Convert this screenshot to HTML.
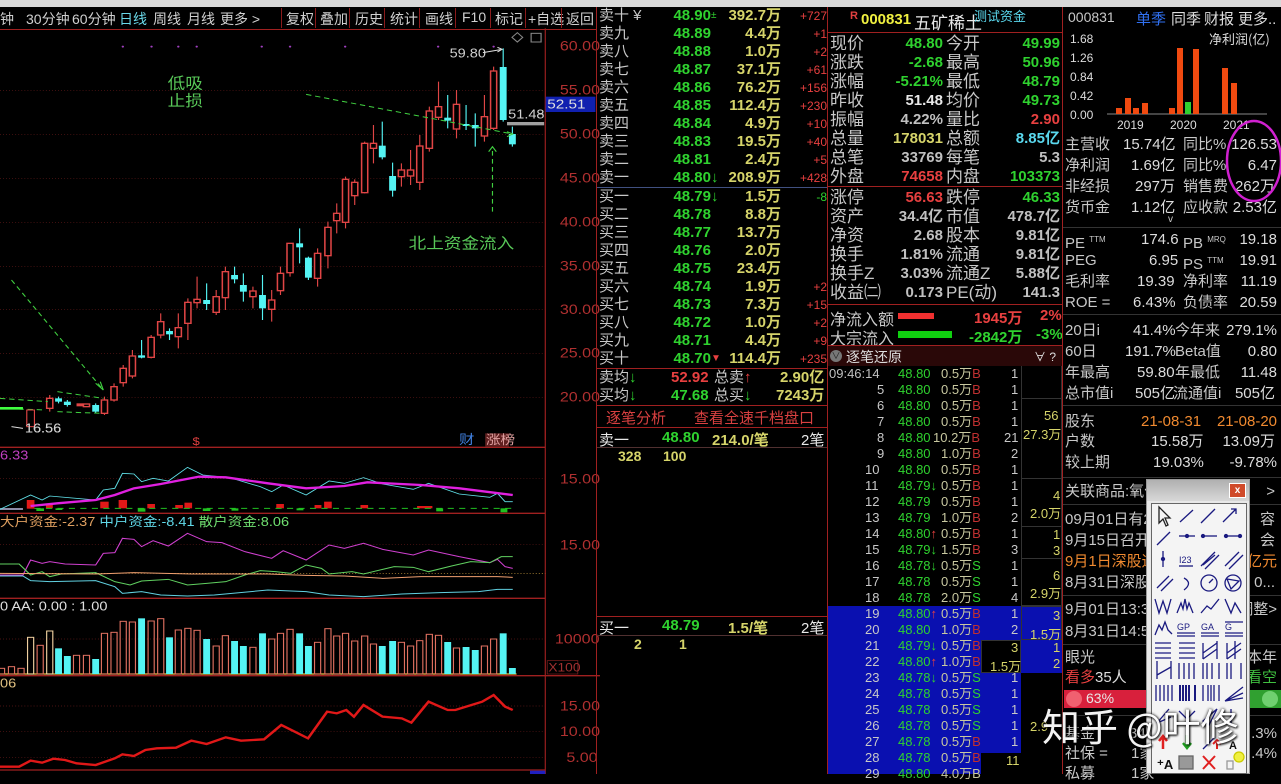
<!DOCTYPE html>
<html><head><meta charset="utf-8">
<style>
*{margin:0;padding:0;box-sizing:border-box}
body{width:1281px;height:774px;background:#000;overflow:hidden;position:relative;font-family:"Liberation Sans","Noto Sans CJK SC",sans-serif;color:#c8c8c8}
.a{position:absolute;white-space:nowrap}
.g{color:#2fd22f}.y{color:#d6d46a}.r{color:#e84040}.w{color:#e8e8e8}.c{color:#5ad8ee}.gr{color:#c0c0c0}.o{color:#f08a30}
.ob{position:absolute;left:599px;width:228px;height:18px;display:grid;grid-template-columns:70px 42px 14px 56px 46px;font-size:15px;line-height:18px}
.ob span:nth-child(2),.ob span:nth-child(4),.ob span:nth-child(5){text-align:right;font-weight:bold}
.ob span:nth-child(5){font-size:12px;font-weight:normal}
.ip{position:absolute;left:830px;width:231px;height:19px;font-size:17px;line-height:19px}
.ip span{position:absolute;white-space:nowrap}
.ip span:nth-child(1){left:0}
.ip span:nth-child(2){right:118px;font-weight:bold;font-size:15px}
.ip span:nth-child(3){left:116px}
.ip span:nth-child(4){right:1px;font-weight:bold;font-size:15px}
.tk{position:absolute;left:829px;width:190px;height:16px;font-size:13px;line-height:16px}
.tk span{position:absolute}
.fr{position:absolute;left:1065px;width:214px;height:21px;font-size:15px;line-height:21px}
.fr span{position:absolute}
.hl{position:absolute;height:1px;background:#8a1a1a}
.vl{position:absolute;width:1px;background:#8a1a1a}
.tb span{position:absolute;top:9px;font-size:14px;color:#d0d0d0}
</style></head><body>
<div class="a" style="left:0;top:0;width:1281px;height:7px;background:#d8d8d8"></div>
<div class="tb">
<span style="left:0">钟</span><span style="left:26px">30分钟</span><span style="left:72px">60分钟</span><span style="left:119px;color:#6ad8e8">日线</span><span style="left:153px">周线</span><span style="left:187px">月线</span><span style="left:220px">更多 &gt;</span>
<span style="left:286px">复权</span><span style="left:320px">叠加</span><span style="left:355px">历史</span><span style="left:390px">统计</span><span style="left:425px">画线</span><span style="left:462px">F10</span><span style="left:495px">标记</span><span style="left:528px">+自选</span><span style="left:566px">返回</span>
</div>
<div class="vl" style="left:281px;top:8px;height:20px"></div><div class="vl" style="left:315px;top:8px;height:20px"></div><div class="vl" style="left:349px;top:8px;height:20px"></div><div class="vl" style="left:384px;top:8px;height:20px"></div><div class="vl" style="left:419px;top:8px;height:20px"></div><div class="vl" style="left:455px;top:8px;height:20px"></div><div class="vl" style="left:490px;top:8px;height:20px"></div><div class="vl" style="left:525px;top:8px;height:20px"></div><div class="vl" style="left:561px;top:8px;height:20px"></div>
<div class="hl" style="left:0;top:29px;width:597px;background:#a02020"></div>

<svg class="a" style="left:0;top:0" width="600" height="440" viewBox="0 0 1568 1320" preserveAspectRatio="none">
<g stroke="#802020" stroke-width="2" stroke-dasharray="2 6">
<line x1="0" y1="271" x2="1425" y2="271"/><line x1="0" y1="403" x2="1425" y2="403"/><line x1="0" y1="535" x2="1425" y2="535"/><line x1="0" y1="667" x2="1425" y2="667"/><line x1="0" y1="799" x2="1425" y2="799"/><line x1="0" y1="929" x2="1425" y2="929"/><line x1="0" y1="1060" x2="1425" y2="1060"/><line x1="0" y1="1192" x2="1425" y2="1192"/>
</g>
<line x1="1425" y1="85" x2="1425" y2="1320" stroke="#a02020" stroke-width="3"/>
<g fill="#b03030" font-size="42" font-family="Liberation Sans">
<text x="1463" y="152">60.00</text><text x="1463" y="284">55.00</text><text x="1463" y="416">50.00</text><text x="1463" y="548">45.00</text><text x="1463" y="680">40.00</text><text x="1463" y="812">35.00</text><text x="1463" y="942">30.00</text><text x="1463" y="1073">25.00</text><text x="1463" y="1205">20.00</text>
</g>
<rect x="1426" y="290" width="130" height="46" fill="#1020b0"/>
<text x="1430" y="325" fill="#e0e0e0" font-size="40" font-family="Liberation Sans">52.51</text>
<g fill="#a040c0"><circle cx="321" cy="140" r="3"/><circle cx="396" cy="140" r="3"/><circle cx="466" cy="140" r="3"/><circle cx="514" cy="140" r="3"/><circle cx="684" cy="140" r="3"/><circle cx="758" cy="140" r="3"/><circle cx="902" cy="140" r="3"/><circle cx="1145" cy="140" r="3"/><circle cx="1290" cy="140" r="3"/></g>
<rect x="1388" y="100" width="26" height="26" fill="none" stroke="#888" stroke-width="3"/><path d="M1352 98 L1366 112 L1352 126 L1338 112Z" fill="none" stroke="#888" stroke-width="3"/>
<g stroke="#e04545" stroke-width="3">
<path d="M130 1185V1235M273 1190V1245M298 1150V1205M322 1095V1160M346 1050V1135M395 1005V1075M420 940V1015M466 940V1045M491 895V1020M515 830V925M565 870V945M589 800V930M661 860V925M710 870V965M733 800V885M758 730V830M830 745V860M857 665V805M880 610V700M903 530V685M927 538V615M953 425V580M976 375V490M1049 490V560M1073 450V555M1097 405V570M1122 320V455M1146 245V360M1193 270V415M1266 285V425M1290 200V390"/>
</g>
<g stroke="#54f4f4" stroke-width="3">
<path d="M153 1190V1210M176 1200V1220M250 1210V1240M370 1020V1075M443 985V1020M540 850V930M613 800V850M636 820V905M686 825V960M783 685V790M806 770V840M999 365V478M1026 488V590M1170 285V385M1218 315V390M1242 340V440M1315 145V365M1339 380V440"/>
</g>
<g fill="#000" stroke="#e04545" stroke-width="4">
<rect x="122" y="1195" width="16" height="30"/><rect x="202" y="1212" width="14" height="5" fill="#e04545"/><rect x="218" y="1212" width="16" height="8"/><rect x="265" y="1200" width="16" height="40"/><rect x="290" y="1160" width="16" height="40"/><rect x="314" y="1105" width="16" height="43"/><rect x="338" y="1068" width="16" height="60"/><rect x="387" y="1012" width="16" height="60"/><rect x="412" y="965" width="16" height="40"/><rect x="458" y="983" width="16" height="27"/><rect x="483" y="907" width="16" height="63"/><rect x="507" y="898" width="16" height="10"/><rect x="557" y="890" width="16" height="47"/><rect x="581" y="815" width="16" height="78"/><rect x="653" y="873" width="16" height="17"/><rect x="702" y="900" width="16" height="28"/><rect x="725" y="820" width="16" height="52"/><rect x="750" y="730" width="16" height="88"/><rect x="822" y="760" width="16" height="75"/><rect x="849" y="682" width="16" height="85"/><rect x="872" y="640" width="16" height="22"/><rect x="895" y="538" width="16" height="129"/><rect x="919" y="547" width="16" height="40"/><rect x="945" y="430" width="16" height="148"/><rect x="968" y="430" width="16" height="15"/><rect x="1041" y="510" width="16" height="20"/><rect x="1065" y="510" width="16" height="18"/><rect x="1089" y="438" width="16" height="109"/><rect x="1114" y="333" width="16" height="112"/><rect x="1138" y="320" width="16" height="32"/><rect x="1185" y="313" width="16" height="74"/><rect x="1258" y="350" width="16" height="58"/><rect x="1282" y="213" width="16" height="172"/>
</g>
<g fill="#54f4f4">
<rect x="144" y="1195" width="18" height="10"/><rect x="167" y="1205" width="18" height="10"/><rect x="241" y="1215" width="18" height="20"/><rect x="361" y="1066" width="18" height="7"/><rect x="434" y="993" width="18" height="10"/><rect x="531" y="900" width="18" height="12"/><rect x="604" y="825" width="18" height="13"/><rect x="627" y="855" width="18" height="20"/><rect x="677" y="885" width="18" height="40"/><rect x="774" y="730" width="18" height="12"/><rect x="797" y="773" width="18" height="60"/><rect x="990" y="437" width="18" height="35"/><rect x="1017" y="528" width="18" height="44"/><rect x="1161" y="353" width="18" height="9"/><rect x="1209" y="372" width="18" height="6"/><rect x="1233" y="375" width="18" height="10"/><rect x="1306" y="201" width="18" height="159"/><rect x="1330" y="402" width="18" height="31"/>
</g>
<rect x="1325" y="366" width="97" height="10" fill="#a0a0a0"/>
<g stroke="#40d040" stroke-width="3" fill="none" stroke-dasharray="14 10">
<path d="M800 283 L1340 402"/><path d="M30 840 L270 1170"/><path d="M0 1195 L125 1205"/><path d="M150 1175 L270 1195"/><path d="M0 1225 L120 1230"/><path d="M150 1235 L265 1240"/><path d="M1287 635 L1287 440"/>
</g>
<g stroke="#40d040" stroke-width="3" fill="none"><path d="M250 1150 L270 1170 L262 1145M1277 455 L1287 440 L1297 455M1325 395 L1340 402 L1325 410"/></g>
<path d="M0 1225 L60 1225" stroke="#40ff40" stroke-width="8"/>
<g fill="#58c858" font-size="46" font-family="Noto Sans CJK SC"><text x="438" y="265">低吸</text><text x="438" y="318">止损</text><text x="1068" y="745">北上资金流入</text></g>
<g fill="#d0d0d0" font-size="38" font-family="Liberation Sans"><text x="1175" y="172">59.80</text><text x="1328" y="355">51.48</text><text x="65" y="1298">16.56</text></g>
<path d="M1262 158 L1312 148 M1300 142 L1312 148 L1300 156" stroke="#ddd" stroke-width="3" fill="none"/>
<path d="M1408 342 L1420 342" stroke="#ddd" stroke-width="3"/>
<path d="M30 1280 L60 1285" stroke="#ddd" stroke-width="3"/>
<rect x="70" y="1230" width="20" height="50" fill="none" stroke="#e04545" stroke-width="3"/>
</svg>

<svg class="a" style="left:0;top:420px" width="600" height="354" viewBox="0 0 1568 1062" preserveAspectRatio="none">
<line x1="0" y1="82" x2="1425" y2="82" stroke="#a02020" stroke-width="4"/>
<line x1="0" y1="280" x2="1425" y2="280" stroke="#a02020" stroke-width="4"/>
<line x1="0" y1="535" x2="1425" y2="535" stroke="#a02020" stroke-width="4"/>
<line x1="0" y1="767" x2="1568" y2="767" stroke="#a02020" stroke-width="4"/>
<line x1="1425" y1="0" x2="1425" y2="1062" stroke="#a02020" stroke-width="3"/>
<line x1="0" y1="1050" x2="1425" y2="1050" stroke="#a02020" stroke-width="4"/>
<g stroke="#802020" stroke-width="2" stroke-dasharray="2 6"><line x1="0" y1="176" x2="1425" y2="176"/><line x1="0" y1="374" x2="1425" y2="374"/><line x1="0" y1="657" x2="1425" y2="657"/><line x1="0" y1="858" x2="1425" y2="858"/><line x1="0" y1="935" x2="1425" y2="935"/><line x1="0" y1="1013" x2="1425" y2="1013"/></g>
<line x1="0" y1="460" x2="1425" y2="460" stroke="#d0a040" stroke-width="2" stroke-dasharray="3 5"/>
<g fill="#b03030" font-size="42" font-family="Liberation Sans"><text x="1463" y="190">15.00</text><text x="1463" y="388">15.00</text><text x="1450" y="670">10000</text><text x="1463" y="872">15.00</text><text x="1463" y="948">10.00</text><text x="1480" y="1026">5.00</text></g>
<rect x="1430" y="722" width="80" height="40" fill="none" stroke="#802020" stroke-width="2"/><text x="1433" y="754" fill="#a03030" font-size="36" font-family="Liberation Sans">X100</text>
<text x="1200" y="72" fill="#4080e0" font-size="40" font-family="Noto Sans CJK SC">财</text>
<rect x="1268" y="40" width="62" height="40" fill="#602020"/><text x="1270" y="72" fill="#e0a0a0" font-size="38" font-family="Noto Sans CJK SC">涨榜</text>
<text x="503" y="75" fill="#e04040" font-size="34" font-family="Liberation Sans">$</text>
<text x="65" y="38" fill="#d0d0d0" font-size="38" font-family="Liberation Sans">16.56</text>
<text x="0" y="118" fill="#c040c0" font-size="38" font-family="Liberation Sans">6.33</text>
<g>
<rect x="70" y="240" width="20" height="26" fill="#e01818"/><rect x="120" y="255" width="18" height="10" fill="#e01818"/><rect x="95" y="265" width="20" height="8" fill="#20c020"/><rect x="145" y="265" width="18" height="5" fill="#20c020"/><rect x="262" y="245" width="22" height="20" fill="#e01818"/><rect x="310" y="240" width="22" height="25" fill="#e01818"/><rect x="360" y="265" width="20" height="10" fill="#20c020"/><rect x="385" y="252" width="20" height="13" fill="#e01818"/><rect x="458" y="255" width="20" height="10" fill="#e01818"/><rect x="482" y="248" width="20" height="17" fill="#e01818"/><rect x="530" y="265" width="20" height="8" fill="#20c020"/><rect x="605" y="265" width="18" height="7" fill="#20c020"/><rect x="722" y="252" width="20" height="13" fill="#e01818"/><rect x="775" y="265" width="18" height="6" fill="#20c020"/><rect x="822" y="255" width="18" height="10" fill="#e01818"/><rect x="847" y="245" width="20" height="20" fill="#e01818"/><rect x="942" y="255" width="20" height="10" fill="#e01818"/><rect x="1090" y="258" width="40" height="7" fill="#e01818"/><rect x="1140" y="265" width="18" height="9" fill="#20c020"/><rect x="1308" y="265" width="18" height="12" fill="#20c020"/>
<line x1="90" y1="265" x2="1350" y2="265" stroke="#20c020" stroke-width="3" stroke-dasharray="16 14"/>
<line x1="0" y1="267" x2="60" y2="267" stroke="#a0a0c0" stroke-width="5"/>
</g>
<polyline fill="none" stroke="#60e0e8" stroke-width="2.5" points="0,268 80,225 110,240 130,228 250,240 270,210 300,205 320,160 350,162 370,185 400,175 440,183 490,142 530,165 600,173 680,200 710,215 740,195 800,225 860,183 900,190 950,173 1000,192 1080,208 1120,190 1200,222 1280,232 1300,220 1320,245 1340,245"/>
<polyline fill="none" stroke="#e020e0" stroke-width="7" points="80,258 150,250 250,240 300,225 350,205 420,192 520,170 590,172 700,190 800,205 900,198 960,187 1100,195 1200,205 1340,225"/>
<text x="0" y="318" font-size="38" font-family="Liberation Sans,Noto Sans CJK SC"><tspan fill="#e0a060">大户资金:-2.37 </tspan><tspan fill="#60d8e8">中户资金:-8.41 </tspan><tspan fill="#70e070">散户资金:8.06</tspan></text>
<polyline fill="none" stroke="#d040d0" stroke-width="3" points="0,465 60,465 80,420 110,430 130,425 170,432 250,435 270,400 300,398 320,355 350,358 370,380 400,362 440,378 490,340 540,365 580,368 640,395 710,415 740,392 800,420 860,375 900,385 950,370 1000,388 1080,405 1120,390 1200,410 1280,428 1300,418 1320,440 1340,445"/>
<polyline fill="none" stroke="#60d060" stroke-width="3" points="0,432 50,432 80,465 110,455 130,470 160,462 250,458 300,485 340,495 370,483 440,478 490,495 540,490 590,485 640,465 680,452 720,455 760,460 800,435 840,445 860,462 920,455 950,462 1000,448 1030,440 1080,442 1120,455 1180,438 1230,425 1280,428 1310,410 1340,410"/>
<polyline fill="none" stroke="#60d0e0" stroke-width="3" points="0,468 60,468 80,482 130,485 250,482 300,500 320,520 370,515 420,525 490,528 560,525 700,510 800,515 860,525 950,530 1050,522 1150,518 1250,515 1300,508 1340,508"/>
<polyline fill="none" stroke="#f0a070" stroke-width="3" points="0,460 250,462 350,458 500,462 700,462 800,466 900,468 1000,475 1100,470 1300,470 1340,472"/>
<text x="0" y="572" fill="#e0e0e0" font-size="38" font-family="Liberation Sans">0 AA: 0.00   : 1.00</text>
<line x1="0" y1="762" x2="1350" y2="762" stroke="#f0c040" stroke-width="4"/>
<g fill="none" stroke="#e07060" stroke-width="3">
<rect x="-4" y="745" width="16" height="17"/><rect x="22" y="740" width="16" height="22"/><rect x="47" y="745" width="16" height="17"/><rect x="72" y="652" width="16" height="110" stroke="#f0d0a0"/><rect x="97" y="676" width="16" height="86"/><rect x="122" y="633" width="16" height="129" stroke="#f0d0a0"/><rect x="192" y="706" width="16" height="56"/><rect x="218" y="706" width="16" height="56"/><rect x="265" y="640" width="16" height="122"/><rect x="290" y="637" width="16" height="125"/><rect x="314" y="604" width="16" height="158"/><rect x="338" y="606" width="16" height="156"/><rect x="387" y="603" width="16" height="159"/><rect x="412" y="596" width="16" height="166"/><rect x="458" y="630" width="16" height="132"/><rect x="483" y="625" width="16" height="137"/><rect x="507" y="631" width="16" height="131"/><rect x="557" y="678" width="16" height="84"/><rect x="581" y="647" width="16" height="115"/><rect x="653" y="682" width="16" height="80"/><rect x="702" y="657" width="16" height="105"/><rect x="725" y="640" width="16" height="122"/><rect x="750" y="628" width="16" height="134"/><rect x="822" y="667" width="16" height="95"/><rect x="849" y="626" width="16" height="136"/><rect x="872" y="648" width="16" height="114"/><rect x="895" y="640" width="16" height="122"/><rect x="919" y="663" width="16" height="99"/><rect x="945" y="648" width="16" height="114"/><rect x="968" y="672" width="16" height="90"/><rect x="1041" y="667" width="16" height="95"/><rect x="1065" y="678" width="16" height="84"/><rect x="1089" y="662" width="16" height="100"/><rect x="1114" y="643" width="16" height="119"/><rect x="1138" y="646" width="16" height="116"/><rect x="1185" y="684" width="16" height="78"/><rect x="1258" y="678" width="16" height="84"/><rect x="1282" y="657" width="16" height="105"/>
</g>
<g fill="#54f4f4">
<rect x="144" y="685" width="18" height="77"/><rect x="167" y="708" width="18" height="54"/><rect x="241" y="717" width="18" height="45"/><rect x="361" y="595" width="18" height="167"/><rect x="434" y="652" width="18" height="110"/><rect x="531" y="657" width="18" height="105"/><rect x="604" y="663" width="18" height="99"/><rect x="627" y="678" width="18" height="84"/><rect x="677" y="640" width="18" height="122"/><rect x="774" y="640" width="18" height="122"/><rect x="797" y="678" width="18" height="84"/><rect x="990" y="678" width="18" height="84"/><rect x="1017" y="663" width="18" height="99"/><rect x="1161" y="666" width="18" height="96"/><rect x="1209" y="681" width="18" height="81"/><rect x="1233" y="690" width="18" height="72"/><rect x="1306" y="640" width="18" height="122"/><rect x="1330" y="744" width="18" height="18"/>
</g>
<text x="0" y="802" fill="#e0c080" font-size="38" font-family="Liberation Sans">06</text>
<polyline fill="none" stroke="#e01818" stroke-width="7" points="0,1040 50,1040 80,1022 110,1028 140,1016 170,1020 200,1030 250,1035 300,1015 320,1003 350,1008 380,990 410,985 460,983 500,962 540,972 590,952 630,962 690,958 735,915 770,935 805,955 855,875 880,880 905,870 925,890 950,855 1000,890 1050,895 1075,908 1120,845 1170,870 1190,870 1260,845 1290,825 1320,860 1340,870"/>
<rect x="1385" y="1052" width="40" height="10" fill="#2020c0"/>
</svg>

<div class="vl" style="left:596px;top:7px;height:767px;background:#a02020"></div>
<div class="vl" style="left:827px;top:7px;height:767px;background:#a02020"></div>
<div class="ob" style="top:7px"><span>卖十 ¥</span><span class="g">48.90</span><span class="g" style="font-size:10px">±</span><span class="y">392.7万</span><span class="r">+727</span></div>
<div class="ob" style="top:25px"><span>卖九</span><span class="g">48.89</span><span></span><span class="y">4.4万</span><span class="r">+1</span></div>
<div class="ob" style="top:43px"><span>卖八</span><span class="g">48.88</span><span></span><span class="y">1.0万</span><span class="r">+2</span></div>
<div class="ob" style="top:61px"><span>卖七</span><span class="g">48.87</span><span></span><span class="y">37.1万</span><span class="r">+61</span></div>
<div class="ob" style="top:79px"><span>卖六</span><span class="g">48.86</span><span></span><span class="y">76.2万</span><span class="r">+156</span></div>
<div class="ob" style="top:97px"><span>卖五</span><span class="g">48.85</span><span></span><span class="y">112.4万</span><span class="r">+230</span></div>
<div class="ob" style="top:115px"><span>卖四</span><span class="g">48.84</span><span></span><span class="y">4.9万</span><span class="r">+10</span></div>
<div class="ob" style="top:133px"><span>卖三</span><span class="g">48.83</span><span></span><span class="y">19.5万</span><span class="r">+40</span></div>
<div class="ob" style="top:151px"><span>卖二</span><span class="g">48.81</span><span></span><span class="y">2.4万</span><span class="r">+5</span></div>
<div class="ob" style="top:169px"><span>卖一</span><span class="g">48.80</span><span class="g">↓</span><span class="y">208.9万</span><span class="r">+428</span></div>
<div class="hl" style="left:597px;top:187px;width:230px;background:#405080"></div>
<div class="ob" style="top:188px"><span>买一</span><span class="g">48.79</span><span class="g">↓</span><span class="y">1.5万</span><span class="g">-8</span></div>
<div class="ob" style="top:206px"><span>买二</span><span class="g">48.78</span><span></span><span class="y">8.8万</span><span></span></div>
<div class="ob" style="top:224px"><span>买三</span><span class="g">48.77</span><span></span><span class="y">13.7万</span><span></span></div>
<div class="ob" style="top:242px"><span>买四</span><span class="g">48.76</span><span></span><span class="y">2.0万</span><span></span></div>
<div class="ob" style="top:260px"><span>买五</span><span class="g">48.75</span><span></span><span class="y">23.4万</span><span></span></div>
<div class="ob" style="top:278px"><span>买六</span><span class="g">48.74</span><span></span><span class="y">1.9万</span><span class="r">+2</span></div>
<div class="ob" style="top:296px"><span>买七</span><span class="g">48.73</span><span></span><span class="y">7.3万</span><span class="r">+15</span></div>
<div class="ob" style="top:314px"><span>买八</span><span class="g">48.72</span><span></span><span class="y">1.0万</span><span class="r">+2</span></div>
<div class="ob" style="top:332px"><span>买九</span><span class="g">48.71</span><span></span><span class="y">4.4万</span><span class="r">+9</span></div>
<div class="ob" style="top:350px"><span>买十</span><span class="g">48.70</span><span class="r" style="font-size:10px">▼</span><span class="y">114.4万</span><span class="r">+235</span></div>
<div class="hl" style="left:597px;top:368px;width:230px;background:#a02020"></div>
<div class="a" style="left:599px;top:369px;font-size:15px;line-height:18px">卖均<span class="g">↓</span></div>
<div class="a r" style="left:671px;top:369px;font-size:15px;font-weight:bold;line-height:18px">52.92</div>
<div class="a" style="left:714px;top:369px;font-size:15px;line-height:18px">总卖<span class="r">↑</span></div>
<div class="a y" style="left:780px;top:369px;font-size:15px;line-height:18px;font-weight:bold">2.90亿</div>
<div class="a" style="left:599px;top:387px;font-size:15px;line-height:18px">买均<span class="g">↓</span></div>
<div class="a g" style="left:671px;top:387px;font-size:15px;font-weight:bold;line-height:18px">47.68</div>
<div class="a" style="left:714px;top:387px;font-size:15px;line-height:18px">总买<span class="g">↓</span></div>
<div class="a y" style="left:776px;top:387px;font-size:15px;line-height:18px;font-weight:bold">7243万</div>
<div class="hl" style="left:597px;top:405px;width:230px;background:#a02020"></div>
<div class="a r" style="left:606px;top:407px;font-size:15px;color:#d84040">逐笔分析</div>
<div class="a r" style="left:694px;top:407px;font-size:15px;color:#d84040">查看全速千档盘口</div>
<div class="hl" style="left:597px;top:427px;width:230px;background:#a02020"></div>
<div class="a w" style="left:599px;top:429px;font-size:15px">卖一</div><div class="a g" style="left:662px;top:429px;font-size:15px;font-weight:bold">48.80</div><div class="a y" style="left:712px;top:429px;font-size:15px;font-weight:bold">214.0/笔</div><div class="a w" style="left:801px;top:429px;font-size:15px">2笔</div>
<div class="hl" style="left:597px;top:447px;width:230px;background:#503030"></div>
<div class="a y" style="left:618px;top:448px;font-size:14px;font-weight:bold">328</div><div class="a y" style="left:663px;top:448px;font-size:14px;font-weight:bold">100</div>
<div class="hl" style="left:597px;top:616px;width:230px;background:#a02020"></div>
<div class="a w" style="left:599px;top:617px;font-size:15px">买一</div><div class="a g" style="left:662px;top:617px;font-size:15px;font-weight:bold">48.79</div><div class="a y" style="left:728px;top:617px;font-size:15px;font-weight:bold">1.5/笔</div><div class="a w" style="left:801px;top:617px;font-size:15px">2笔</div>
<div class="hl" style="left:597px;top:635px;width:230px;background:#503030"></div>
<div class="a y" style="left:634px;top:636px;font-size:14px;font-weight:bold">2</div><div class="a y" style="left:679px;top:636px;font-size:14px;font-weight:bold">1</div>

<div class="a" style="left:850px;top:10px;font-size:11px;color:#e04040;font-weight:bold">R</div>
<div class="a" style="left:861px;top:11px;font-size:15px;color:#f0f040;font-weight:bold">000831</div>
<div class="a w" style="left:914px;top:9px;font-size:17px">五矿稀土</div>
<div class="a c" style="left:974px;top:6px;font-size:13px">测试资金</div>
<div class="hl" style="left:828px;top:32px;width:234px;background:#a02020"></div>
<div class="ip" style="top:34px"><span>现价</span><span class="g">48.80</span><span>今开</span><span class="g">49.99</span></div>
<div class="ip" style="top:53px"><span>涨跌</span><span class="g">-2.68</span><span>最高</span><span class="g">50.96</span></div>
<div class="ip" style="top:72px"><span>涨幅</span><span class="g">-5.21%</span><span>最低</span><span class="g">48.79</span></div>
<div class="ip" style="top:91px"><span>昨收</span><span class="w">51.48</span><span>均价</span><span class="g">49.73</span></div>
<div class="ip" style="top:110px"><span>振幅</span><span class="gr">4.22%</span><span>量比</span><span class="r">2.90</span></div>
<div class="ip" style="top:129px"><span>总量</span><span class="y">178031</span><span>总额</span><span class="c">8.85亿</span></div>
<div class="ip" style="top:148px"><span>总笔</span><span class="gr">33769</span><span>每笔</span><span class="gr">5.3</span></div>
<div class="ip" style="top:167px"><span>外盘</span><span class="r">74658</span><span>内盘</span><span class="g">103373</span></div>
<div class="hl" style="left:828px;top:186px;width:234px;background:#a02020"></div>
<div class="ip" style="top:188px"><span>涨停</span><span class="r">56.63</span><span>跌停</span><span class="g">46.33</span></div>
<div class="ip" style="top:207px"><span>资产</span><span class="gr">34.4亿</span><span>市值</span><span class="gr">478.7亿</span></div>
<div class="ip" style="top:226px"><span>净资</span><span class="gr">2.68</span><span>股本</span><span class="gr">9.81亿</span></div>
<div class="ip" style="top:245px"><span>换手</span><span class="gr">1.81%</span><span>流通</span><span class="gr">9.81亿</span></div>
<div class="ip" style="top:264px"><span>换手Z</span><span class="gr">3.03%</span><span>流通Z</span><span class="gr">5.88亿</span></div>
<div class="ip" style="top:283px"><span>收益㈡</span><span class="gr">0.173</span><span>PE(动)</span><span class="gr">141.3</span></div>
<div class="hl" style="left:828px;top:304px;width:234px;background:#a02020"></div>
<div class="a" style="left:830px;top:306px;font-size:16px">净流入额</div><div class="a" style="left:898px;top:313px;width:36px;height:6px;background:#f03030"></div><div class="a r" style="left:974px;top:307px;font-size:15px;font-weight:bold">1945万</div><div class="a r" style="left:1040px;top:307px;font-size:15px;font-weight:bold">2%</div>
<div class="a" style="left:830px;top:325px;font-size:16px">大宗流入</div><div class="a" style="left:898px;top:331px;width:54px;height:7px;background:#10d010"></div><div class="a g" style="left:969px;top:326px;font-size:15px;font-weight:bold">-2842万</div><div class="a g" style="left:1036px;top:326px;font-size:15px;font-weight:bold">-3%</div>
<div class="hl" style="left:828px;top:345px;width:234px;background:#a02020"></div>
<div class="a" style="left:828px;top:346px;width:234px;height:20px;background:#2a0808"></div>
<div class="a" style="left:830px;top:350px;width:12px;height:12px;border-radius:50%;background:#777;font-size:9px;color:#222;text-align:center;line-height:12px">∨</div>
<div class="a" style="left:846px;top:347px;font-size:14px;color:#ddd">逐笔还原</div>
<div class="a" style="left:1034px;top:348px;font-size:12px;color:#ddd">∀ ?</div>
<div class="a" style="left:828px;top:606px;width:234px;height:168px;background:#0a10b0"></div>
<div class="a" style="left:981px;top:640px;width:40px;height:33px;background:#000;border:1px solid #333"></div>
<div class="a" style="left:1021px;top:606px;width:41px;height:34px;border:1px solid #333"></div>
<div class="a" style="left:1021px;top:673px;width:41px;height:101px;background:#000"></div>
<div class="a" style="left:981px;top:753px;width:40px;height:21px;background:#000"></div>
<div class="a" style="left:1021px;top:366px;width:41px;height:240px;border:1px solid #333;border-top:0"></div>
<div class="hl" style="left:1021px;top:398px;width:41px;background:#333"></div>
<div class="hl" style="left:1021px;top:478px;width:41px;background:#333"></div>
<div class="hl" style="left:1021px;top:526px;width:41px;background:#333"></div>
<div class="hl" style="left:1021px;top:558px;width:41px;background:#333"></div>
<div class="a y" style="left:1044px;top:408px;font-size:13px">56</div><div class="a y" style="left:1023px;top:424px;font-size:13px">27.3万</div>
<div class="a y" style="left:1053px;top:488px;font-size:13px">4</div><div class="a y" style="left:1030px;top:503px;font-size:13px">2.0万</div>
<div class="a y" style="left:1053px;top:527px;font-size:13px">1</div><div class="a y" style="left:1053px;top:543px;font-size:13px">3</div>
<div class="a y" style="left:1053px;top:568px;font-size:13px">6</div><div class="a y" style="left:1030px;top:583px;font-size:13px">2.9万</div>
<div class="a y" style="left:1053px;top:608px;font-size:13px">3</div><div class="a y" style="left:1030px;top:624px;font-size:13px">1.5万</div>
<div class="a y" style="left:1011px;top:640px;font-size:13px">3</div><div class="a y" style="left:990px;top:656px;font-size:13px">1.5万</div>
<div class="a y" style="left:1053px;top:640px;font-size:13px">1</div><div class="a y" style="left:1053px;top:656px;font-size:13px">2</div>
<div class="a y" style="left:1030px;top:719px;font-size:13px">2.9</div>
<div class="a y" style="left:1006px;top:753px;font-size:13px">11</div>

<div class="vl" style="left:1062px;top:7px;height:767px;background:#a02020"></div>
<div class="a" style="left:1068px;top:9px;font-size:14px">000831</div>
<div class="a" style="left:1136px;top:8px;font-size:15px;color:#3070f0">单季</div>
<div class="a" style="left:1171px;top:8px;font-size:15px;color:#ddd">同季</div>
<div class="a" style="left:1204px;top:8px;font-size:15px;color:#ddd">财报</div>
<div class="a" style="left:1238px;top:8px;font-size:15px;color:#ddd">更多..</div>
<svg class="a" style="left:1062px;top:30px" width="219" height="105">
<g fill="#ddd" font-size="12" font-family="Liberation Sans"><text x="8" y="13">1.68</text><text x="8" y="32">1.26</text><text x="8" y="51">0.84</text><text x="8" y="70">0.42</text><text x="8" y="89">0.00</text><text x="55" y="99">2019</text><text x="108" y="99">2020</text><text x="161" y="99">2021</text></g>
<text x="147" y="14" fill="#ddd" font-size="13" font-family="Noto Sans CJK SC">净利润(亿)</text>
<line x1="45" y1="84" x2="205" y2="84" stroke="#888"/>
<g fill="#f04a10"><rect x="54" y="78" width="6" height="6"/><rect x="63" y="68" width="6" height="16"/><rect x="71" y="78" width="6" height="6"/><rect x="80" y="73" width="6" height="11"/><rect x="107" y="78" width="6" height="6"/><rect x="115" y="18" width="6" height="66"/><rect x="131" y="19" width="6" height="65"/><rect x="160" y="38" width="6" height="46"/><rect x="169" y="53" width="6" height="31"/></g>
<rect x="123" y="72" width="6" height="12" fill="#30d030"/>
</svg>
<div class="fr" style="top:134px"><span>主营收</span><span style="left:58px;color:#ddd">15.74亿</span><span style="left:118px">同比%</span><span style="right:2px;color:#ddd">126.53</span></div>
<div class="fr" style="top:155px"><span>净利润</span><span style="left:66px;color:#ddd">1.69亿</span><span style="left:118px">同比%</span><span style="right:2px;color:#ddd">6.47</span></div>
<div class="fr" style="top:176px"><span>非经损</span><span style="left:70px;color:#ddd">297万</span><span style="left:118px">销售费</span><span style="right:4px;color:#ddd">262万</span></div>
<div class="fr" style="top:197px"><span>货币金</span><span style="left:66px;color:#ddd">1.12亿</span><span style="left:118px">应收款</span><span style="right:2px;color:#ddd">2.53亿</span></div>
<div class="a" style="left:1168px;top:214px;font-size:10px">v</div>
<div class="hl" style="left:1063px;top:227px;width:218px;background:#333"></div>
<div class="fr" style="top:229px"><span>PE <sup style="font-size:8px">TTM</sup></span><span style="left:76px;color:#ddd">174.6</span><span style="left:118px">PB <sup style="font-size:8px">MRQ</sup></span><span style="right:2px;color:#ddd">19.18</span></div>
<div class="fr" style="top:250px"><span>PEG</span><span style="left:84px;color:#ddd">6.95</span><span style="left:118px">PS <sup style="font-size:8px">TTM</sup></span><span style="right:2px;color:#ddd">19.91</span></div>
<div class="fr" style="top:271px"><span>毛利率</span><span style="left:72px;color:#ddd">19.39</span><span style="left:118px">净利率</span><span style="right:2px;color:#ddd">11.19</span></div>
<div class="fr" style="top:292px"><span>ROE =</span><span style="left:68px;color:#ddd">6.43%</span><span style="left:118px">负债率</span><span style="right:2px;color:#ddd">20.59</span></div>
<div class="hl" style="left:1063px;top:314px;width:218px;background:#333"></div>
<div class="fr" style="top:320px"><span>20日i</span><span style="left:68px;color:#ddd">41.4%</span><span style="left:110px">今年来</span><span style="right:2px;color:#ddd">279.1%</span></div>
<div class="fr" style="top:341px"><span>60日</span><span style="left:60px;color:#ddd">191.7%</span><span style="left:110px">Beta值</span><span style="right:2px;color:#ddd">0.80</span></div>
<div class="fr" style="top:362px"><span>年最高</span><span style="left:72px;color:#ddd">59.80</span><span style="left:110px">年最低</span><span style="right:2px;color:#ddd">11.48</span></div>
<div class="fr" style="top:383px"><span>总市值i</span><span style="left:70px;color:#ddd">505亿</span><span style="left:108px">流通值i</span><span style="right:4px;color:#ddd">505亿</span></div>
<div class="hl" style="left:1063px;top:405px;width:218px;background:#333"></div>
<div class="fr" style="top:411px"><span>股东</span><span class="o" style="left:76px">21-08-31</span><span class="o" style="right:2px">21-08-20</span></div>
<div class="fr" style="top:431px"><span>户数</span><span style="left:86px;color:#ddd">15.58万</span><span style="right:4px;color:#ddd">13.09万</span></div>
<div class="fr" style="top:452px"><span>较上期</span><span style="left:88px;color:#ddd">19.03%</span><span style="right:2px;color:#ddd">-9.78%</span></div>
<div class="hl" style="left:1063px;top:477px;width:218px;background:#333"></div>
<div class="fr" style="top:481px"><span>关联商品:氧化</span><span style="right:4px">&gt;</span></div>
<div class="hl" style="left:1063px;top:504px;width:218px;background:#333"></div>
<div class="fr" style="top:509px"><span>09月01日有2</span><span style="right:4px">容</span></div>
<div class="fr" style="top:530px"><span>9月15日召开</span><span style="right:4px">会</span></div>
<div class="fr" style="top:551px"><span class="o">9月1日深股通</span><span class="o" style="right:2px">亿元</span></div>
<div class="fr" style="top:572px"><span>8月31日深股</span><span style="right:4px">0...</span></div>
<div class="hl" style="left:1063px;top:595px;width:218px;background:#333"></div>
<div class="fr" style="top:599px"><span>9月01日13:3</span><span style="right:2px">调整&gt;</span></div>
<div class="fr" style="top:621px"><span>8月31日14:5</span></div>
<div class="hl" style="left:1063px;top:644px;width:218px;background:#333"></div>
<div class="fr" style="top:647px"><span>眼光</span><span style="right:2px">本年</span></div>
<div class="fr" style="top:667px"><span class="r">看多</span><span style="left:30px;color:#ddd">35人</span><span style="right:2px;color:#40c040">看空</span></div>
<div class="a" style="left:1064px;top:690px;width:90px;height:18px;background:#d8203c"></div>
<div class="a" style="left:1066px;top:691px;width:16px;height:16px;border-radius:50%;background:#f06070"></div>
<div class="a w" style="left:1086px;top:690px;font-size:14px">63%</div>
<div class="a" style="left:1250px;top:690px;width:31px;height:18px;background:#30a030"></div>
<div class="a" style="left:1262px;top:691px;width:16px;height:16px;border-radius:50%;background:#70d070"></div>
<div class="hl" style="left:1063px;top:715px;width:218px;background:#333"></div>
<div class="fr" style="top:723px"><span>基金</span><span style="left:64px">34家</span><span style="right:2px">.3%</span></div>
<div class="fr" style="top:743px"><span>社保 =</span><span style="left:66px">1家</span><span style="right:2px">.4%</span></div>
<div class="fr" style="top:763px"><span>私募</span><span style="left:66px">1家</span></div>
<svg class="a" style="left:1218px;top:118px" width="63" height="88"><ellipse cx="36" cy="43" rx="27" ry="40" fill="none" stroke="#d020d0" stroke-width="2.5"/></svg>

<div class="a" style="left:1146px;top:479px;width:104px;height:295px;background:#e8e8e8;border:1px solid #999"></div>
<div class="a" style="left:1147px;top:480px;width:102px;height:21px;background:linear-gradient(#b0b0b0,#d8d8d8)"></div>
<div class="a" style="left:1229px;top:483px;width:17px;height:15px;background:#d04a2a;border:1px solid #fff;color:#fff;font-size:10px;text-align:center;line-height:13px;font-weight:bold">x</div>
<div class="a" style="left:1151px;top:503px;width:96px;height:271px;background:#f4f4f4;border:1px solid #666"></div>
<svg class="a" style="left:1151px;top:503px" width="96" height="271" fill="none" stroke="#1a1a80" stroke-width="1.3">
<path d="M8 4 L8 20 L12 16 L15 23 L17 22 L14 15 L19 15 Z" stroke="#222"/>
<path d="M29 19 L42 7"/><path d="M50 20 L64 6"/><path d="M72 19 L85 6 M80 6 L85 6 L85 11"/>
<path d="M6 42 L19 29"/><path d="M28 33 L44 33"/><circle cx="36" cy="33" r="1.5" fill="#1a1a80"/><path d="M50 33 L66 33"/><circle cx="52" cy="33" r="1.5" fill="#1a1a80"/><path d="M74 33 L90 33"/><circle cx="75" cy="33" r="1.5" fill="#1a1a80"/><circle cx="89" cy="33" r="1.5" fill="#1a1a80"/>
<path d="M12 48 L12 64"/><circle cx="12" cy="56" r="1.5" fill="#1a1a80"/>
<text x="28" y="60" font-size="9" fill="#1a1a80" stroke="none" font-family="Liberation Sans">I23</text><path d="M28 63 L42 63"/>
<path d="M50 63 L64 49 M54 66 L68 52 M52 62 L64 52"/><path d="M74 63 L88 49 M78 66 L92 52"/>
<path d="M6 85 L18 73 M10 88 L22 76"/><path d="M33 75 Q42 80 33 87"/><circle cx="58" cy="80" r="8"/><path d="M58 80 L62 76"/><circle cx="82" cy="80" r="8"/><path d="M76 76 L88 78 L80 86 Z"/>
<path d="M4 96 L8 110 L12 98 L16 110 L20 96"/><path d="M26 110 L30 100 L32 106 L34 96 L36 106 L38 100 L42 110"/><path d="M50 110 L56 103 L60 106 L68 96"/><path d="M74 96 L80 110 L84 100 L90 110"/>
<path d="M4 132 L8 122 L11 127 L14 119 L17 127 L21 131"/>
<text x="26" y="127" font-size="9" fill="#1a1a80" stroke="none" font-family="Liberation Sans">GP</text><path d="M26 130 L44 130 M26 133 L44 133"/>
<text x="50" y="127" font-size="9" fill="#1a1a80" stroke="none" font-family="Liberation Sans">GA</text><path d="M50 130 L68 130 M50 133 L68 133"/>
<text x="74" y="127" font-size="9" fill="#1a1a80" stroke="none" font-family="Liberation Sans">G</text><path d="M74 119 L92 119 M74 130 L92 130 M74 133 L92 133"/>
<path d="M4 140 L20 140 M4 145 L20 145 M4 150 L20 150 M4 155 L20 155"/><path d="M28 140 L44 140 M28 145 L44 145 M28 150 L44 150 M28 155 L44 155"/>
<path d="M52 140 L52 156 M52 150 L66 140 M52 156 L66 146 M66 138 L66 156"/><path d="M76 140 L76 156 M76 150 L90 140 M76 156 L90 146 M84 138 L84 156"/>
<path d="M6 158 L6 176 M6 172 L20 164 M20 158 L20 176"/><path d="M28 160 L28 176 M33 160 L33 176 M38 160 L38 176 M43 160 L43 176"/><path d="M52 160 L52 176 M56 160 L56 176 M61 160 L61 176 M68 160 L68 176"/><path d="M76 160 L76 176 M80 160 L80 176 M90 160 L90 176"/>
<path d="M5 182 L5 198 M9 182 L9 198 M13 182 L13 198 M17 182 L17 198 M21 182 L21 198"/><path d="M29 182 L29 198 M32 182 L32 198 M35 182 L35 198 M38 182 L38 198 M44 182 L44 198" stroke-width="2"/><path d="M52 182 L52 198 M57 182 L57 198 M60 182 L60 198 M63 182 L63 198 M68 182 L68 198"/><path d="M74 198 L92 184 M74 198 L92 190 M74 198 L92 195"/>
<path d="M6 220 L18 206 M6 220 L20 214"/><path d="M28 208 L36 216 L44 208 M36 216 L36 222"/><path d="M52 218 L66 206 L58 222 Z"/><path d="M80 206 L80 222"/>
<path d="M12 246 L12 234 M8 238 L12 233 L16 238" stroke="#e02020" stroke-width="2.5"/><path d="M36 232 L36 244 M32 240 L36 245 L40 240" stroke="#20a020" stroke-width="2.5"/><path d="M52 246 L64 234" /><path d="M66 246 L66 238 M62 241 L66 237 L70 241" stroke="#e02020" stroke-width="2"/>
<text x="78" y="246" font-size="11" fill="#111" stroke="none" font-family="Liberation Sans" font-weight="bold">A</text>
<text x="6" y="266" font-size="13" fill="#111" stroke="none" font-family="Liberation Sans" font-weight="bold">⁺A</text>
<rect x="28" y="253" width="14" height="13" fill="#999" stroke="#666"/><path d="M52 253 L64 266 M64 253 L52 266" stroke="#e02020" stroke-width="2"/><rect x="76" y="258" width="6" height="8" stroke="#999"/><circle cx="88" cy="254" r="5" fill="#f0f040" stroke="#cc0"/>
</svg>
<div class="a" style="left:1042px;top:697px;font-size:38px;color:#fff;font-family:'Noto Sans CJK SC',sans-serif;text-shadow:0 0 3px #000,1px 1px 2px #000;opacity:.95">知乎 @叶修</div>

<div class="tk" style="top:366px"><span style="left:0" class="gr">09:46:14</span><span class="g" style="left:69px">48.80</span><span style="left:112px;color:#c8c8a0">0.5万<i style="color:#c03030;font-style:normal">B</i></span><span style="left:182px">1</span></div>
<div class="tk" style="top:382px"><span style="left:48px">5</span><span class="g" style="left:69px">48.80</span><span style="left:112px;color:#c8c8a0">0.5万<i style="color:#c03030;font-style:normal">B</i></span><span style="left:182px">1</span></div>
<div class="tk" style="top:398px"><span style="left:48px">6</span><span class="g" style="left:69px">48.80</span><span style="left:112px;color:#c8c8a0">0.5万<i style="color:#c03030;font-style:normal">B</i></span><span style="left:182px">1</span></div>
<div class="tk" style="top:414px"><span style="left:48px">7</span><span class="g" style="left:69px">48.80</span><span style="left:112px;color:#c8c8a0">0.5万<i style="color:#c03030;font-style:normal">B</i></span><span style="left:182px">1</span></div>
<div class="tk" style="top:430px"><span style="left:48px">8</span><span class="g" style="left:69px">48.80</span><span style="left:104px;color:#c8c8a0">10.2万<i style="color:#c03030;font-style:normal">B</i></span><span style="left:175px">21</span></div>
<div class="tk" style="top:446px"><span style="left:48px">9</span><span class="g" style="left:69px">48.80</span><span style="left:112px;color:#c8c8a0">1.0万<i style="color:#c03030;font-style:normal">B</i></span><span style="left:182px">2</span></div>
<div class="tk" style="top:462px"><span style="left:36px">10</span><span class="g" style="left:69px">48.80</span><span style="left:112px;color:#c8c8a0">0.5万<i style="color:#c03030;font-style:normal">B</i></span><span style="left:182px">1</span></div>
<div class="tk" style="top:478px"><span style="left:36px">11</span><span class="g" style="left:69px">48.79<i style="font-style:normal">↓</i></span><span style="left:112px;color:#c8c8a0">0.5万<i style="color:#c03030;font-style:normal">B</i></span><span style="left:182px">1</span></div>
<div class="tk" style="top:494px"><span style="left:36px">12</span><span class="g" style="left:69px">48.79</span><span style="left:112px;color:#c8c8a0">0.5万<i style="color:#c03030;font-style:normal">B</i></span><span style="left:182px">1</span></div>
<div class="tk" style="top:510px"><span style="left:36px">13</span><span class="g" style="left:69px">48.79</span><span style="left:112px;color:#c8c8a0">1.0万<i style="color:#c03030;font-style:normal">B</i></span><span style="left:182px">2</span></div>
<div class="tk" style="top:526px"><span style="left:36px">14</span><span class="g" style="left:69px">48.80<i class="r" style="font-style:normal">↑</i></span><span style="left:112px;color:#c8c8a0">0.5万<i style="color:#c03030;font-style:normal">B</i></span><span style="left:182px">1</span></div>
<div class="tk" style="top:542px"><span style="left:36px">15</span><span class="g" style="left:69px">48.79<i style="font-style:normal">↓</i></span><span style="left:112px;color:#c8c8a0">1.5万<i style="color:#c03030;font-style:normal">B</i></span><span style="left:182px">3</span></div>
<div class="tk" style="top:558px"><span style="left:36px">16</span><span class="g" style="left:69px">48.78<i style="font-style:normal">↓</i></span><span style="left:112px;color:#c8c8a0">0.5万<i class="g" style="font-style:normal">S</i></span><span style="left:182px">1</span></div>
<div class="tk" style="top:574px"><span style="left:36px">17</span><span class="g" style="left:69px">48.78</span><span style="left:112px;color:#c8c8a0">0.5万<i class="g" style="font-style:normal">S</i></span><span style="left:182px">1</span></div>
<div class="tk" style="top:590px"><span style="left:36px">18</span><span class="g" style="left:69px">48.78</span><span style="left:112px;color:#c8c8a0">2.0万<i class="g" style="font-style:normal">S</i></span><span style="left:182px">4</span></div>
<div class="tk" style="top:606px"><span style="left:36px">19</span><span class="g" style="left:69px">48.80<i class="r" style="font-style:normal">↑</i></span><span style="left:112px;color:#c8c8a0">0.5万<i style="color:#c03030;font-style:normal">B</i></span><span style="left:182px">1</span></div>
<div class="tk" style="top:622px"><span style="left:36px">20</span><span class="g" style="left:69px">48.80</span><span style="left:112px;color:#c8c8a0">1.0万<i style="color:#c03030;font-style:normal">B</i></span><span style="left:182px">2</span></div>
<div class="tk" style="top:638px"><span style="left:36px">21</span><span class="g" style="left:69px">48.79<i style="font-style:normal">↓</i></span><span style="left:112px;color:#c8c8a0">0.5万<i style="color:#c03030;font-style:normal">B</i></span></div>
<div class="tk" style="top:654px"><span style="left:36px">22</span><span class="g" style="left:69px">48.80<i class="r" style="font-style:normal">↑</i></span><span style="left:112px;color:#c8c8a0">1.0万<i style="color:#c03030;font-style:normal">B</i></span></div>
<div class="tk" style="top:670px"><span style="left:36px">23</span><span class="g" style="left:69px">48.78<i style="font-style:normal">↓</i></span><span style="left:112px;color:#c8c8a0">0.5万<i class="g" style="font-style:normal">S</i></span><span style="left:182px">1</span></div>
<div class="tk" style="top:686px"><span style="left:36px">24</span><span class="g" style="left:69px">48.78</span><span style="left:112px;color:#c8c8a0">0.5万<i class="g" style="font-style:normal">S</i></span><span style="left:182px">1</span></div>
<div class="tk" style="top:702px"><span style="left:36px">25</span><span class="g" style="left:69px">48.78</span><span style="left:112px;color:#c8c8a0">0.5万<i class="g" style="font-style:normal">S</i></span><span style="left:182px">1</span></div>
<div class="tk" style="top:718px"><span style="left:36px">26</span><span class="g" style="left:69px">48.78</span><span style="left:112px;color:#c8c8a0">0.5万<i class="g" style="font-style:normal">S</i></span><span style="left:182px">1</span></div>
<div class="tk" style="top:734px"><span style="left:36px">27</span><span class="g" style="left:69px">48.78</span><span style="left:112px;color:#c8c8a0">0.5万<i style="color:#c03030;font-style:normal">B</i></span><span style="left:182px">1</span></div>
<div class="tk" style="top:750px"><span style="left:36px">28</span><span class="g" style="left:69px">48.78</span><span style="left:112px;color:#c8c8a0">0.5万<i style="color:#c03030;font-style:normal">B</i></span></div>
<div class="tk" style="top:766px"><span style="left:36px">29</span><span class="g" style="left:69px">48.80</span><span style="left:112px;color:#c8c8a0">4.0万B</span></div>
</body></html>
